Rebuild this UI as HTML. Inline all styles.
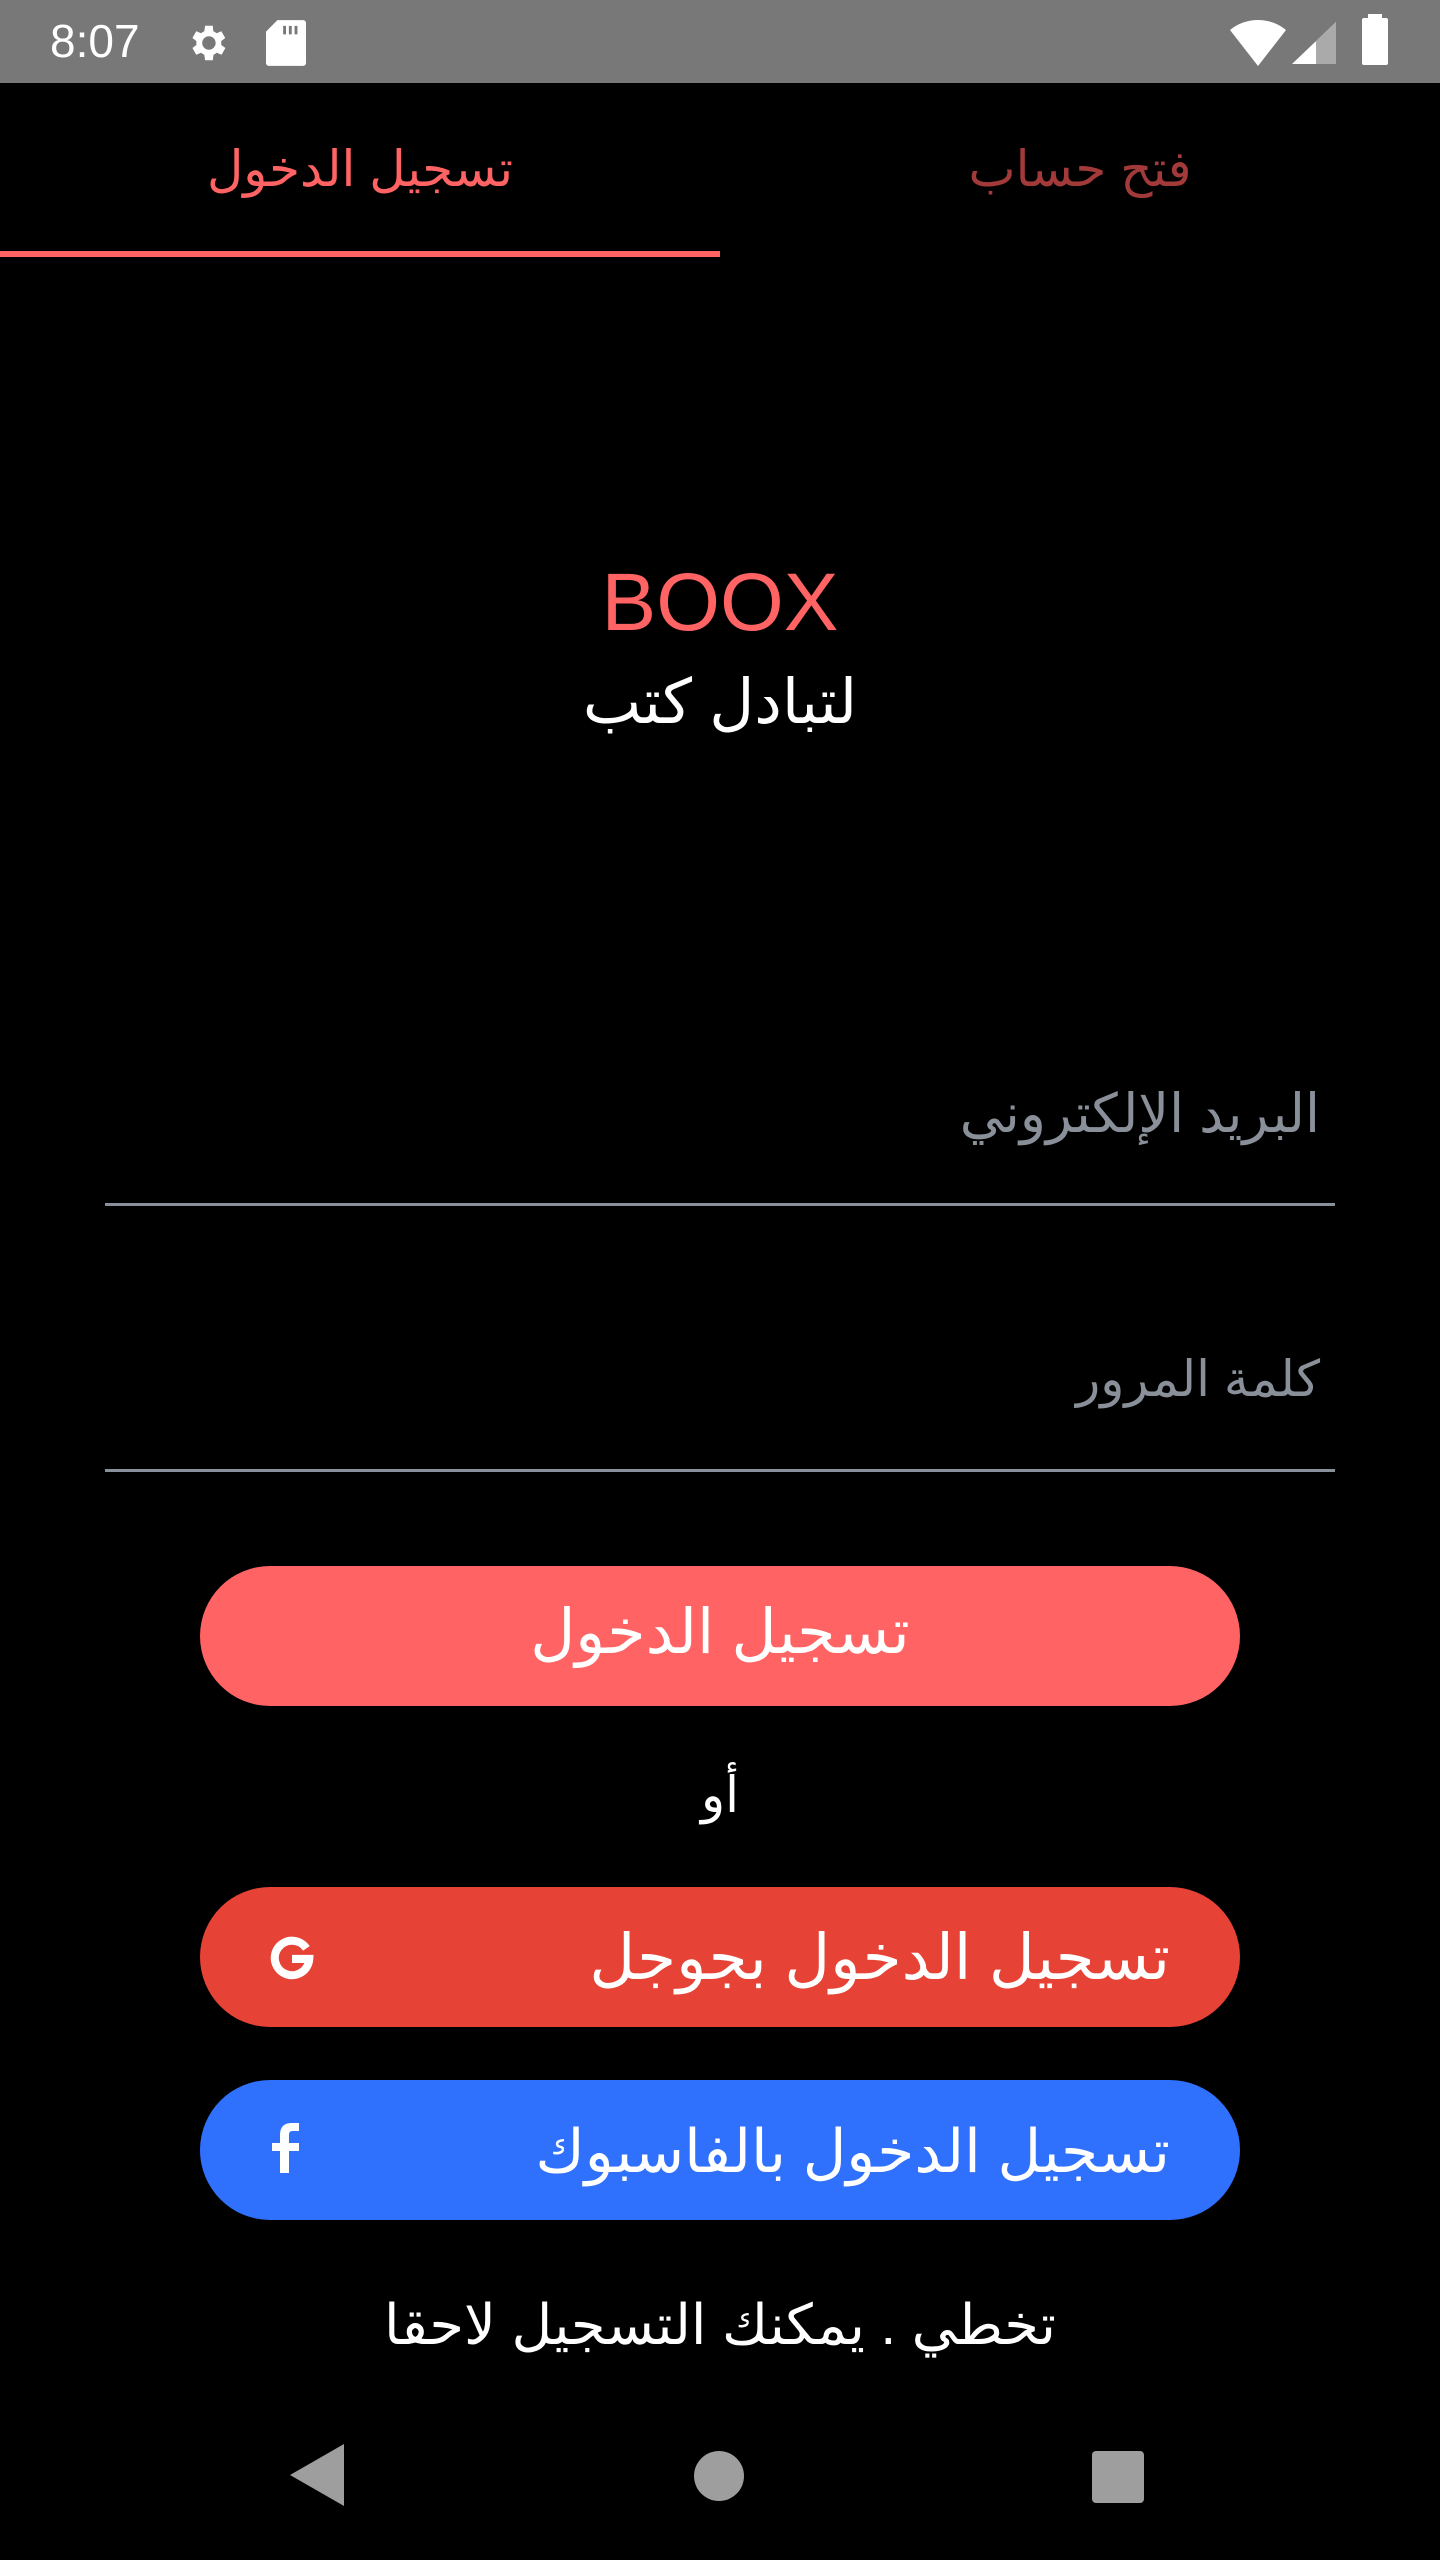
<!DOCTYPE html>
<html><head><meta charset="utf-8"><style>
*{margin:0;padding:0;box-sizing:border-box}
body{width:1440px;height:2560px;background:#000;position:relative;overflow:hidden;font-family:"Liberation Sans","DejaVu Sans","Noto Sans CJK SC",sans-serif;color:#fff}
.abs{position:absolute}
.c{position:absolute;left:0;width:1440px;text-align:center;line-height:1}
.btn{position:absolute;left:200px;width:1040px;height:140px;border-radius:70px}
</style></head><body>
<div class="abs" style="left:0;top:0;width:1440px;height:83px;background:#787878"></div>
<div class="abs" style="left:50px;top:16px;font-size:46px;color:#fff;line-height:50px">8:07</div>
<svg class="abs" style="left:184px;top:20px" width="46" height="46" viewBox="0 0 24 24"><path fill="#fff" d="M19.4 13a7.5 7.5 0 0 0 0-2l2.1-1.6-2-3.5-2.5 1a7 7 0 0 0-1.7-1L15 3h-4l-.4 2.9a7 7 0 0 0-1.7 1l-2.5-1-2 3.5L6.5 11a7.5 7.5 0 0 0 0 2l-2.1 1.6 2 3.5 2.5-1a7 7 0 0 0 1.7 1L11 21h4l.4-2.9a7 7 0 0 0 1.7-1l2.5 1 2-3.5zM13 15.5a3.5 3.5 0 1 1 0-7 3.5 3.5 0 0 1 0 7z"/></svg>
<svg class="abs" style="left:266px;top:20px" width="40" height="46" viewBox="0 0 14 16"><path fill="#fff" d="M4 0h9a1 1 0 0 1 1 1v14a1 1 0 0 1-1 1H1a1 1 0 0 1-1-1V4z"/><path fill="#787878" d="M6 2h1v3H6zM8 2h1v3H8zM10 2h1v3h-1z"/></svg>
<svg class="abs" style="left:1230px;top:18px" width="56" height="48" viewBox="0 0 28 24"><path fill="#fff" d="M14 24 0 6a22 22 0 0 1 28 0z"/></svg>
<svg class="abs" style="left:1292px;top:22px" width="44" height="42" viewBox="0 0 22 21"><path fill="#fff" d="M0 21 22 0v21z"/><path fill="#aaa" d="M12 9.5 22 0v21H12z"/></svg>
<div class="abs" style="left:1362px;top:18px;width:26px;height:47px;background:#fff;border-radius:2px"></div>
<div class="abs" style="left:1368px;top:14px;width:14px;height:6px;background:#fff"></div>

<div class="abs" style="left:0;top:137px;width:720px;text-align:center;font-size:50px;color:#ff6363;line-height:64px">تسجيل الدخول</div>
<div class="abs" style="left:720px;top:137px;width:720px;text-align:center;font-size:50px;color:#a33a3a;line-height:64px">فتح حساب</div>
<div class="abs" style="left:0;top:251px;width:720px;height:6px;background:#ff6363"></div>

<div class="c" style="top:562px;font-size:82px;color:#ff6363">BOOX</div>
<div class="c" style="top:672px;font-size:62px;color:#fff">لتبادل كتب</div>

<div class="abs" style="left:105px;width:1215px;top:1082px;text-align:right;font-size:54px;color:#8a9099;direction:rtl">البريد الإلكتروني</div>
<div class="abs" style="left:105px;top:1203px;width:1230px;height:3px;background:#8a9099"></div>
<div class="abs" style="left:105px;width:1215px;top:1350px;text-align:right;font-size:50px;color:#8a9099;direction:rtl">كلمة المرور</div>
<div class="abs" style="left:105px;top:1469px;width:1230px;height:3px;background:#8a9099"></div>

<div class="btn" style="top:1566px;background:#ff6363"></div>
<div class="c" style="top:1602px;font-size:62px;color:#fff">تسجيل الدخول</div>
<div class="c" style="top:1770px;font-size:50px;color:#fff">أو</div>

<div class="btn" style="top:1887px;background:#e64336"></div>
<div class="abs" style="left:200px;width:970px;top:1923px;text-align:right;font-size:63px;color:#fff;direction:rtl;line-height:70px">تسجيل الدخول بجوجل</div>
<svg class="abs" style="left:269px;top:1934px" width="46" height="46" viewBox="0 0 24 24"><path fill="none" stroke="#fff" stroke-width="4.2" d="M19.5 7.5A9 9 0 1 0 21 13H12"/></svg>

<div class="btn" style="top:2080px;background:#2f71fd"></div>
<div class="abs" style="left:200px;width:970px;top:2117px;text-align:right;font-size:60px;color:#fff;direction:rtl;line-height:70px">تسجيل الدخول بالفاسبوك</div>
<svg class="abs" style="left:272px;top:2123px" width="28" height="50" viewBox="0 0 28 50"><path fill="#fff" d="M8 50V28H0v-8h8v-8C8 4 12 0 20 0h7v8h-6c-3 0-4 1-4 4v8h10v8H17v22z"/></svg>

<div class="c" style="top:2297px;font-size:56px;color:#fff">تخطي . يمكنك التسجيل لاحقا</div>

<svg class="abs" style="left:290px;top:2444px" width="54" height="62" viewBox="0 0 54 62"><path fill="#9e9e9e" d="M54 0v62L0 31z"/></svg>
<div class="abs" style="left:694px;top:2451px;width:50px;height:50px;border-radius:50%;background:#9e9e9e"></div>
<div class="abs" style="left:1092px;top:2451px;width:52px;height:52px;border-radius:4px;background:#9e9e9e"></div>
</body></html>
